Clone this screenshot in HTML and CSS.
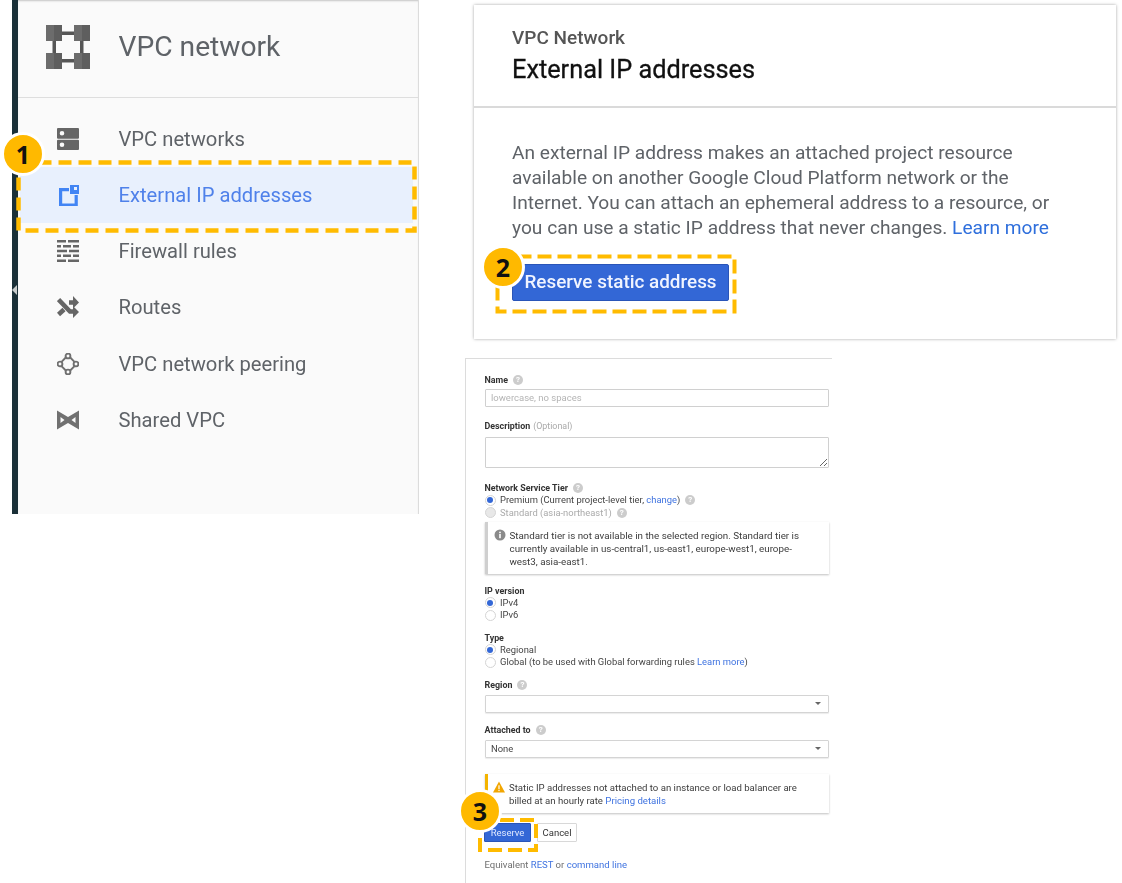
FILE: index.html
```html
<!DOCTYPE html>
<html lang="en">
<head>
<meta charset="utf-8">
<title>VPC network - External IP addresses</title>
<link rel="stylesheet" href="styles.css">
</head>
<body>
<section class="shot shot-side">
  <div class="strip"><span class="strip-arrow"></span></div>
  <aside class="sidebar">
    <header class="side-head">
      <svg class="head-icon" viewBox="0 0 44 44"><g fill="#565656"><rect x="16" y="6.500" width="12" height="3.500"/><rect x="16" y="34" width="12" height="3.500"/><rect x="6.500" y="16" width="3.500" height="12"/><rect x="34" y="16" width="3.500" height="12"/></g><g fill="#6c6c6c"><rect width="16" height="16"/><rect x="28" width="16" height="16"/><rect y="28" width="16" height="16"/><rect x="28" y="28" width="16" height="16"/></g><g fill="#5e5e5e"><rect x="8" width="8" height="16"/><rect x="36" width="8" height="16"/><rect x="8" y="28" width="8" height="16"/><rect x="36" y="28" width="8" height="16"/></g></svg>
      <h1 class="side-title">VPC network</h1>
    </header>
    <nav class="nav">
      <a class="nav-row">
        <svg class="nav-icon" viewBox="0 0 22 22"><path fill="#666" fill-rule="evenodd" d="M1 0h20a1 1 0 0 1 1 1v8.800a1 1 0 0 1-1 1H1a1 1 0 0 1-1-1V1a1 1 0 0 1 1-1zm4 3a2.300 2.300 0 1 0 0 4.600A2.300 2.300 0 0 0 5 3zM1 11.800h20a1 1 0 0 1 1 1V21a1 1 0 0 1-1 1H1a1 1 0 0 1-1-1v-8.200a1 1 0 0 1 1-1zm4 2.600a2.300 2.300 0 1 0 0 4.600 2.300 2.300 0 0 0 0-4.600z"/></svg>
        <span>VPC networks</span>
      </a>
      <a class="nav-row nav-row-on">
        <svg class="nav-icon" viewBox="0 0 22 22"><path fill="none" stroke="#4285f4" stroke-width="3.200" d="M12 5.600H3.600v15.600h15.600V11"/><rect x="13" y="1" width="9" height="9" fill="#4285f4"/><rect x="17" y="3" width="3" height="3" fill="#e8f0fd"/></svg>
        <span>External IP addresses</span>
      </a>
      <a class="nav-row">
        <svg class="nav-icon" viewBox="0 0 22 22"><path fill="none" stroke="#666" stroke-width="2.600" d="M0 1.300h9M11 1.300h11M0 6.200h4M6 6.200h8M16 6.200h6M0 11h10M12 11h10M0 15.800h4M6 15.800h8M16 15.800h6M0 20.700h9M11 20.700h11"/></svg>
        <span>Firewall rules</span>
      </a>
      <a class="nav-row">
        <svg class="nav-icon" viewBox="0 0 22 22"><path fill="none" stroke="#666" stroke-width="4.600" d="M1.500 3.500L13 15.500h4M1.500 18.500l5.500-5M12 6.500h5"/><path fill="#666" d="M16 0l6 6.500-6 6zM16 10l6 6-6 6z"/></svg>
        <span>Routes</span>
      </a>
      <a class="nav-row">
        <svg class="nav-icon" viewBox="0 0 22 22"><g fill="none" stroke="#707070" stroke-width="1.900"><circle cx="11" cy="3" r="2.400"/><circle cx="11" cy="19" r="2.400"/><circle cx="3" cy="11" r="2.400"/><circle cx="19" cy="11" r="2.400"/><path d="M8.800 4.500L4.500 8.800M13.200 4.500l4.300 4.300M4.500 13.200l4.300 4.300M17.500 13.200l-4.300 4.300"/></g></svg>
        <span>VPC network peering</span>
      </a>
      <a class="nav-row">
        <svg class="nav-icon" viewBox="0 0 22 22"><path fill="#707070" fill-rule="evenodd" d="M0 1.500l11 6.500L22 1.500v19L11 14 0 20.500zM3.500 8v6l4-3zM18.500 8l-4 3 4 3z"/></svg>
        <span>Shared VPC</span>
      </a>
    </nav>
  </aside>
</section>

<section class="shot card">
  <header class="card-head">
    <p class="card-kicker">VPC Network</p>
    <h2 class="card-title">External IP addresses</h2>
  </header>
  <div class="card-body">
    <p class="card-text">An external IP address makes an attached project resource<br>available on another Google Cloud Platform network or the<br>Internet. You can attach an ephemeral address to a resource, or<br>you can use a static IP address that never changes. <a class="card-link">Learn more</a></p>
    <button class="big-btn" type="button">Reserve static address</button>
  </div>
</section>

<section class="shot form">
  <div class="lbl lbl-name"><b>Name</b><span class="help">?</span></div>
  <input class="field field-name" placeholder="lowercase, no spaces">
  <div class="lbl lbl-desc"><b>Description</b> <span class="opt">(Optional)</span></div>
  <textarea class="field field-desc"></textarea>
  <div class="lbl lbl-tier"><b>Network Service Tier</b><span class="help">?</span></div>
  <div class="radio"><i class="dot dot-on"></i>Premium (Current project-level tier,&nbsp;<a class="lnk">change</a>)<span class="help">?</span></div>
  <div class="radio radio-off"><i class="dot dot-off"></i>Standard (asia-northeast1)<span class="help">?</span></div>
  <div class="note note-info">
    <svg class="note-icon" viewBox="0 0 12 12"><circle cx="6" cy="6" r="5.500" fill="#8a8a8a"/><rect x="5.200" y="5" width="1.600" height="4.200" fill="#fff"/><rect x="5.200" y="2.700" width="1.600" height="1.500" fill="#fff"/></svg>
    <p>Standard tier is not available in the selected region. Standard tier is<br>currently available in us-central1, us-east1, europe-west1, europe-<br>west3, asia-east1.</p>
  </div>
  <div class="lbl lbl-ip"><b>IP version</b></div>
  <div class="radio"><i class="dot dot-on"></i>IPv4</div>
  <div class="radio"><i class="dot"></i>IPv6</div>
  <div class="lbl lbl-type"><b>Type</b></div>
  <div class="radio"><i class="dot dot-on"></i>Regional</div>
  <div class="radio"><i class="dot"></i>Global (to be used with Global forwarding rules&nbsp;<a class="lnk">Learn more</a>)</div>
  <div class="lbl lbl-region"><b>Region</b><span class="help">?</span></div>
  <div class="select"><span></span><i class="caret"></i></div>
  <div class="lbl lbl-att"><b>Attached to</b><span class="help">?</span></div>
  <div class="select"><span>None</span><i class="caret"></i></div>
  <div class="note note-warn">
    <svg class="note-icon" viewBox="0 0 12 11"><path fill="#f2a600" d="M6 0l6 11H0z"/><rect x="5.400" y="3.800" width="1.200" height="3.800" fill="#fff"/><rect x="5.400" y="8.300" width="1.200" height="1.300" fill="#fff"/></svg>
    <p>Static IP addresses not attached to an instance or load balancer are<br>billed at an hourly rate <a class="lnk">Pricing details</a></p>
  </div>
  <div class="actions">
    <button class="btn-main" type="button">Reserve</button>
    <button class="btn-plain" type="button">Cancel</button>
  </div>
  <p class="equiv">Equivalent <a class="lnk">REST</a> or <a class="lnk">command line</a></p>
</section>

<svg class="dash dash-1" viewBox="0 0 401 73"><rect x="2.500" y="2.500" width="396" height="68" fill="none" stroke="#ffbb00" stroke-width="4.500" stroke-dasharray="13 7"/></svg>
<svg class="dash dash-2" viewBox="0 0 242 60"><rect x="2.500" y="2.500" width="237" height="55" fill="none" stroke="#ffbb00" stroke-width="4" stroke-dasharray="14 6"/></svg>
<svg class="dash dash-3" viewBox="0 0 60 34"><rect x="2" y="2" width="56" height="30" fill="none" stroke="#ffbb00" stroke-width="4" stroke-dasharray="14 6"/></svg>

<div class="badge badge-1">1</div>
<div class="badge badge-2">2</div>
<div class="badge badge-3">3</div>
</body>
</html>
```
FILE: styles.css
```css
* { box-sizing: border-box; }
html, body { margin: 0; padding: 0; }
body {
  position: relative;
  width: 1122px;
  height: 883px;
  overflow: hidden;
  background: #fff;
  font-family: Roboto, "Liberation Sans", sans-serif;
}
p, h1, h2 { margin: 0; font-weight: 400; }
.shot { position: absolute; filter: blur(.35px); }

/* left capture */
.shot-side { left: 12px; top: 0; width: 407px; height: 514px; display: flex; }
.strip { position: relative; width: 6px; background: #1a3038; }
.strip-arrow {
  position: absolute; left: 0; top: 285px;
  border: 5px solid transparent; border-right-color: #c8cccc; border-left: 0;
}
.sidebar {
  flex: 1;
  background: #fafafa;
  border-right: 1px solid #dcdcdc;
  box-shadow: inset 0 2px 2px -1px #c4c4c4;
}
.side-head {
  height: 98px;
  border-bottom: 1px solid #dedede;
  display: flex;
  align-items: center;
  padding-left: 28px;
  gap: 28.500px;
}
.head-icon { width: 44px; height: 44px; margin-top: -4px; }
.side-title { font-size: 28.200px; color: #5f6368; margin-top: -4px; }
.nav { padding-top: 12.500px; }
.nav-row {
  height: 56.250px;
  display: flex;
  align-items: center;
  gap: 39.500px;
  padding-left: 39px;
  font-size: 20.200px;
  color: #5f6368;
}
.nav-row-on {
  margin: 0 5px 0 2px;
  padding-left: 37px;
  background: #e8f0fd;
  color: #4f81ea;
}
.nav-icon { width: 22px; height: 22px; flex: none; }

/* card */
.card {
  left: 474px; top: 5px; width: 642px; height: 334px;
  background: #fff;
  box-shadow: 0 0 3px rgba(0,0,0,.35);
}
.card-head { height: 103px; border-bottom: 2px solid #dadada; padding: 20px 0 0 38px; }
.card-kicker { font-size: 19px; line-height: 26px; font-weight: 500; color: #555; }
.card-title { font-size: 25.300px; line-height: 38px; font-weight: 400; color: #111; -webkit-text-stroke: .3px #111; }
.card-body { padding: 32px 0 0 38px; }
.card-text { font-size: 19.150px; line-height: 25px; color: #5f6368; white-space: nowrap; }
.card-link { color: #2f6fdc; }
.big-btn {
  display: block;
  margin-top: 24px;
  width: 217px; height: 37px;
  padding: 0 0 2px;
  border: 1px solid #2a55b8;
  border-radius: 2px;
  background: #3367d6;
  color: #f0f4ff;
  font: 500 18.900px Roboto, sans-serif;
}

/* form */
.form {
  left: 465px; top: 358px; width: 367px; height: 525px;
  border-top: 1px solid #dcdcdc;
  border-left: 1px solid #dcdcdc;
  padding: 15px 3px 0 19px;
  font-size: 9.400px;
  color: #444;
}
.lbl { height: 12px; line-height: 12px; font-size: 8.900px; display: flex; align-items: center; color: #333; margin-left: -.5px; }
.lbl b { font-weight: 700; }
.opt { color: #aaa; margin-left: 3px; }
.lbl-desc { margin-top: 13px; }
.lbl-tier { margin-top: 14px; }
.lbl-ip { margin-top: 10.500px; }
.lbl-type { margin-top: 10px; }
.lbl-region { margin-top: 10.500px; }
.lbl-att { margin-top: 11px; }
.help {
  display: inline-block; width: 10px; height: 10px; margin-left: 5px;
  border-radius: 50%; background: #ccc; color: #fff;
  font: 700 8px/10px Roboto, sans-serif; text-align: center;
}
.field {
  display: block; width: 344px; padding: 0 5px;
  background: #fff;
  border: 1px solid #d0d0d0; border-radius: 1px;
  font: 9.500px Roboto, sans-serif;
}
.field::placeholder { color: #b4b4b4; }
.field-name { height: 18px; margin-top: 3px; padding-bottom: 2px; }
.field-desc { height: 31px; margin-top: 5px; }
.radio { height: 12.500px; line-height: 12.500px; display: flex; align-items: center; }
.radio-off { color: #aaa; }
.dot {
  flex: none; width: 11px; height: 11px; margin-right: 4.500px; margin-left: -.5px;
  border: 1px solid #d4d4d4; border-radius: 50%; background: #fff;
  display: flex; align-items: center; justify-content: center;
}
.dot-on::after { content: ""; width: 6px; height: 6px; border-radius: 50%; background: #3367d6; }
.dot-off { background: #e8e8e8; }
.lnk { color: #3f73e0; }
.note {
  display: flex;
  width: 344px;
  background: #fff;
  box-shadow: 0 1px 2px rgba(0,0,0,.25);
  line-height: 13px;
  color: #3c3c3c;
}
.note-info { height: 52px; margin-top: 3px; border-left: 3px solid #cfcfcf; padding: 6.500px 0 0 6px; font-size: 9.800px; }
.note-warn { height: 39px; margin-top: 16px; border-left: 3px solid #f4b400; padding: 6.500px 0 0 5px; font-size: 9.600px; }
.note-icon { width: 12px; height: 12px; flex: none; margin-right: 3.500px; }
.note-warn .note-icon { margin-right: 4px; }
.select {
  height: 18px; width: 344px; margin-top: 4px; padding: 0 5px 1px;
  display: flex; align-items: center; justify-content: space-between;
  border: 1px solid #d4d4d4; border-radius: 1px; background: #fff;
  box-shadow: 0 1px 1px rgba(0,0,0,.08);
}
.caret { border: 3.500px solid transparent; border-top: 3.500px solid #666; border-bottom: 0; margin-right: 2px; }
.actions { display: flex; gap: 6px; margin-top: 10px; margin-left: -1px; }
.btn-main {
  width: 47px; height: 19px; padding: 0;
  background: #3367d6; color: #dfe8ff;
  border: 1px solid #2a55b8; border-radius: 1px;
  font: 400 9.500px Roboto, sans-serif;
}
.btn-plain {
  width: 40px; height: 19px; padding: 0;
  background: #fff; color: #333;
  border: 1px solid #d8d8d8; border-radius: 1px;
  font: 400 9.500px Roboto, sans-serif;
}
.equiv { margin: 16.500px 0 0 -.5px; line-height: 12px; font-size: 9.550px; color: #6f6f6f; }

/* annotations */
.dash { position: absolute; }
.dash-1 { left: 16px; top: 159.500px; width: 401px; height: 73px; }
.dash-2 { left: 495px; top: 254px; width: 242px; height: 60px; }
.dash-3 { left: 478px; top: 818px; width: 60px; height: 34px; }
.badge {
  position: absolute;
  width: 44px; height: 44px;
  border: 3px solid #fff; border-radius: 50%;
  background: #ffb900;
  color: #111;
  font: 700 25px/38px "Open Sans", sans-serif;
  text-align: center;
}
.badge-1 { left: 1px; top: 132px; }
.badge-2 { left: 481px; top: 245px; }
.badge-3 { left: 458px; top: 789px; }
```
